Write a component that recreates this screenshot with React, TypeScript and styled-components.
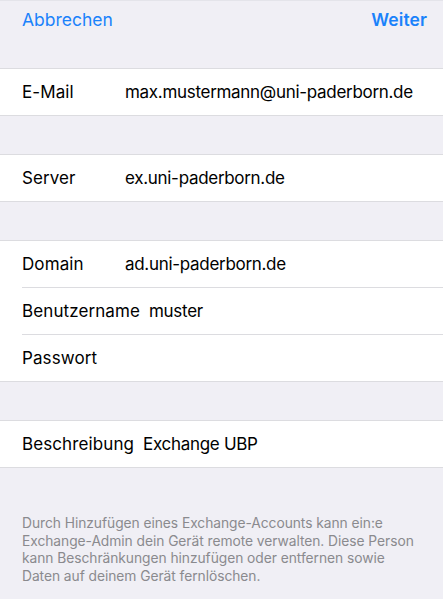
import styled, { createGlobalStyle } from 'styled-components';

const GlobalStyle = createGlobalStyle`
  html, body {
    margin: 0;
    padding: 0;
    background: #f0eff5;
  }
  body {
    font-family: Inter, "Noto Sans", "Liberation Sans", sans-serif;
    -webkit-font-smoothing: antialiased;
  }
`;

type Field = { label: string; value?: string };

const sections: Field[][] = [
  [{ label: 'E-Mail', value: 'max.mustermann@uni-paderborn.de' }],
  [{ label: 'Server', value: 'ex.uni-paderborn.de' }],
  [
    { label: 'Domain', value: 'ad.uni-paderborn.de' },
    { label: 'Benutzername', value: 'muster' },
    { label: 'Passwort' },
  ],
  [{ label: 'Beschreibung', value: 'Exchange UBP' }],
];

export default function App() {
  return (
    <>
      <GlobalStyle />
      <Page>
        <NavBar>
          <NavButton>Abbrechen</NavButton>
          <NavButton bold>Weiter</NavButton>
        </NavBar>

        <Groups>
          {sections.map((rows, i) => (
            <Group key={i}>
              {rows.map((row) => (
                <Row key={row.label}>
                  <Label>{row.label}</Label>
                  {row.value && <Value>{row.value}</Value>}
                </Row>
              ))}
            </Group>
          ))}
        </Groups>

        <Footnote>
          Durch Hinzufügen eines Exchange-Accounts kann ein:e Exchange-Admin
          dein Gerät remote verwalten. Diese Person kann Beschränkungen
          hinzufügen oder entfernen sowie Daten auf deinem Gerät fernlöschen.
        </Footnote>
      </Page>
    </>
  );
}

const Page = styled.div`
  width: 443px;
  min-height: 599px;
  background: #f0eff5;
  border-top: 1px solid #e4e4ea;
  box-sizing: border-box;
`;

const NavBar = styled.div`
  display: flex;
  justify-content: space-between;
  align-items: center;
  height: 37px;
  padding: 0 16px 0 22px;
`;

const NavButton = styled.span<{ bold?: boolean }>`
  font-size: 17.5px;
  color: #1a82fb;
  font-weight: ${({ bold }) => (bold ? 600 : 400)};
  letter-spacing: ${({ bold }) => (bold ? '0.1px' : '0')};
`;

const Groups = styled.div`
  display: flex;
  flex-direction: column;
  gap: 38px;
  margin-top: 30px;
`;

const Group = styled.div`
  background: #fff;
  border-top: 1px solid #dcdce0;
  border-bottom: 1px solid #dcdce0;
`;

const Row = styled.div`
  display: flex;
  align-items: center;
  height: 46px;
  padding-left: 22px;
  font-size: 17px;
  color: #000;

  & + & {
    border-top: 1px solid #dcdce0;
    margin-left: 22px;
    padding-left: 0;
  }
`;

const Label = styled.span`
  min-width: 94px;
  margin-right: 9px;
  white-space: nowrap;
  letter-spacing: 0.1px;
`;

const Value = styled.span`
  white-space: nowrap;
  letter-spacing: -0.3px;
`;

const Footnote = styled.p`
  margin: 47px 0 0;
  padding: 0 18px 0 22px;
  font-size: 13.8px;
  line-height: 17.5px;
  color: #8a8a8e;
  letter-spacing: -0.05px;
`;
